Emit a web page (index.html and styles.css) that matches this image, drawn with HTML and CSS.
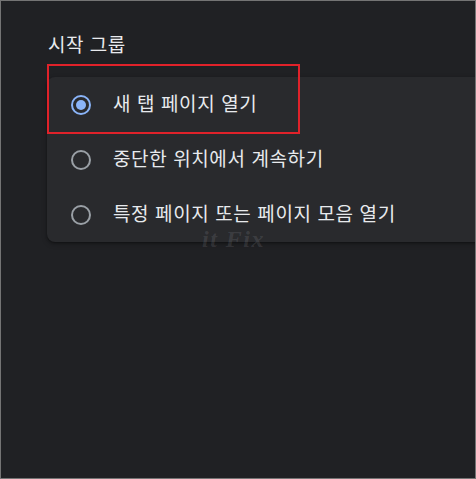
FILE: index.html
```html
<!DOCTYPE html>
<html lang="ko">
<head>
<meta charset="utf-8">
<link rel="stylesheet" href="styles.css">
</head>
<body>
<div class="frame">
  <h2 class="section-title">시작 그룹</h2>
  <div class="card">
    <div class="row">
      <span class="radio checked"></span>
      <span class="label">새 탭 페이지 열기</span>
    </div>
    <div class="row">
      <span class="radio"></span>
      <span class="label">중단한 위치에서 계속하기</span>
    </div>
    <div class="row">
      <span class="radio"></span>
      <span class="label">특정 페이지 또는 페이지 모음 열기</span>
    </div>
  </div>
  <div class="highlight"></div>
  <div class="watermark">it Fix</div>
</div>
</body>
</html>
```

FILE: styles.css
```css
* { box-sizing: border-box; }
html, body { margin: 0; padding: 0; background: #202124; }
.frame {
  position: relative;
  width: 476px;
  height: 479px;
  border: 1px solid #747474;
  background: #202124;
  overflow: hidden;
  padding: 29px 0 0 46px;
  font-family: "Noto Sans CJK KR", "Noto Sans", sans-serif;
  color: #e8eaed;
}
.section-title {
  margin: 0 0 20px 1px;
  font-size: 19px;
  font-weight: 400;
  line-height: 27px;
  letter-spacing: 0.5px;
}
.card {
  margin-right: -20px;
  background: #292a2d;
  border-radius: 8px;
  box-shadow: 0 1px 2px rgba(0,0,0,0.35), 0 2px 5px 1px rgba(0,0,0,0.2);
}
.row {
  display: flex;
  align-items: center;
  height: 55px;
  padding-left: 24px;
  gap: 22px;
}
.radio {
  width: 20px;
  height: 20px;
  border-radius: 50%;
  border: 2px solid #9aa0a6;
  flex: none;
  display: flex;
  align-items: center;
  justify-content: center;
}
.radio.checked { border-color: #8ab4f8; }
.radio.checked::after {
  content: "";
  width: 10px;
  height: 10px;
  border-radius: 50%;
  background: #8ab4f8;
}
.label {
  font-size: 19px;
  line-height: 24px;
  letter-spacing: 0.6px;
  color: #e8eaed;
  margin-top: -3px;
}
.highlight {
  position: absolute;
  left: 46px;
  top: 63px;
  width: 253px;
  height: 70px;
  border: 2px solid #e0222a;
}
.watermark {
  position: absolute;
  left: 201px;
  top: 225px;
  font-family: "Liberation Serif", serif;
  font-style: italic;
  font-weight: bold;
  font-size: 24px;
  color: rgba(190, 190, 200, 0.14);
  letter-spacing: 1.5px;
}
```
